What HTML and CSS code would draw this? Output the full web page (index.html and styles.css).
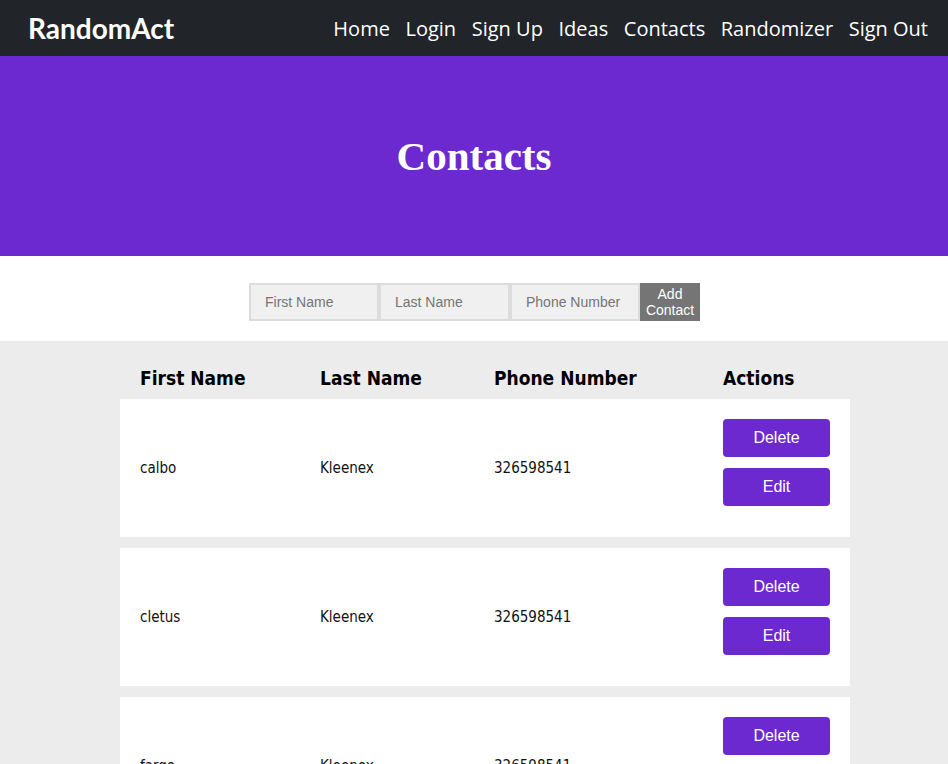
FILE: index.html
```html
<!DOCTYPE html>
<html>
<head>
<meta charset="utf-8">
<link rel="stylesheet" href="styles.css">
</head>
<body>
<nav class="navbar">
  <a class="brand" href="#">RandomAct</a>
  <ul class="nav-links">
    <li><a href="#">Home</a></li>
    <li><a href="#">Login</a></li>
    <li><a href="#">Sign Up</a></li>
    <li><a href="#">Ideas</a></li>
    <li><a href="#">Contacts</a></li>
    <li><a href="#">Randomizer</a></li>
    <li><a href="#">Sign Out</a></li>
  </ul>
</nav>
<header class="hero">
  <h1>Contacts</h1>
</header>
<section class="form-area">
  <form class="add-form">
    <input type="text" placeholder="First Name">
    <input type="text" class="mid" placeholder="Last Name">
    <input type="text" placeholder="Phone Number">
    <button type="button" class="add-btn">Add Contact</button>
  </form>
</section>
<main class="list-area">
  <div class="contacts">
    <div class="row head">
      <div>First Name</div>
      <div>Last Name</div>
      <div>Phone Number</div>
      <div>Actions</div>
    </div>
    <div class="row card">
      <div>calbo</div>
      <div>Kleenex</div>
      <div>326598541</div>
      <div class="actions"><button class="btn">Delete</button><button class="btn">Edit</button></div>
    </div>
    <div class="row card">
      <div>cletus</div>
      <div>Kleenex</div>
      <div>326598541</div>
      <div class="actions"><button class="btn">Delete</button><button class="btn">Edit</button></div>
    </div>
    <div class="row card">
      <div>fargo</div>
      <div>Kleenex</div>
      <div>326598541</div>
      <div class="actions"><button class="btn">Delete</button><button class="btn">Edit</button></div>
    </div>
  </div>
</main>
</body>
</html>
```
FILE: styles.css
```css
* { box-sizing: border-box; }
body {
  margin: 0;
  background: #ececec;
  font-family: "DejaVu Sans Condensed", "DejaVu Sans", sans-serif;
  font-stretch: condensed;
}
.navbar {
  height: 56px;
  background: #212529;
  display: flex;
  align-items: center;
  justify-content: space-between;
  padding: 0 20px 0 28px;
}
.brand {
  color: #fff;
  text-decoration: none;
  font-family: Lato, sans-serif;
  font-stretch: normal;
  font-weight: 700;
  font-size: 28px;
}
.nav-links {
  list-style: none;
  margin: 0;
  padding: 0;
  display: flex;
  gap: 15.6px;
}
.nav-links a {
  color: #fff;
  text-decoration: none;
  font-family: "Open Sans", sans-serif;
  font-stretch: normal;
  font-size: 20px;
}
.hero {
  background: #6c29cf;
  height: 200px;
  display: flex;
  align-items: center;
  justify-content: center;
}
.hero h1 {
  margin: 0;
  color: #fff;
  font-family: "Liberation Serif", serif;
  font-stretch: normal;
  font-weight: 700;
  font-size: 41px;
}
.form-area {
  background: #fff;
  height: 85px;
  display: flex;
  justify-content: center;
  padding-top: 27px;
}
.add-form {
  display: flex;
  height: 38px;
  margin-left: 1px;
}
.add-form input {
  width: 130px;
  height: 38px;
  border: 2px solid #dcdcdc;
  background: #f0f0f0;
  padding: 0 14px;
  font-family: "Liberation Sans", Arial, sans-serif;
  font-stretch: normal;
  font-size: 14px;
  color: #333;
  margin: 0;
}
.add-form input.mid { width: 131px; }
.add-form input::placeholder { color: #757575; }
.add-btn {
  width: 60px;
  height: 38px;
  background: #757575;
  color: #fff;
  border: none;
  padding: 0 2px;
  font-family: "Liberation Sans", Arial, sans-serif;
  font-stretch: normal;
  font-size: 14px;
  line-height: 16px;
}
.list-area {
  padding-left: 120px;
}
.contacts {
  width: 730px;
}
.row {
  display: grid;
  grid-template-columns: 180px 174px 229px 1fr;
  align-items: center;
  padding: 0 20px;
}
.head {
  padding-top: 25px;
  padding-bottom: 9px;
  font-weight: 700;
  font-size: 19px;
  color: #000;
  line-height: 24px;
}
.card {
  background: #fff;
  padding-top: 20px;
  padding-bottom: 20px;
  margin-bottom: 11px;
  font-size: 15px;
  color: #111;
}
.actions {
  display: flex;
  flex-direction: column;
}
.btn {
  width: 107px;
  height: 38px;
  margin-bottom: 11px;
  background: #6c29cf;
  color: #fff;
  border: none;
  border-radius: 4px;
  font-family: "Liberation Sans", Arial, sans-serif;
  font-stretch: normal;
  font-size: 16px;
  padding-top: 1px;
}
```
